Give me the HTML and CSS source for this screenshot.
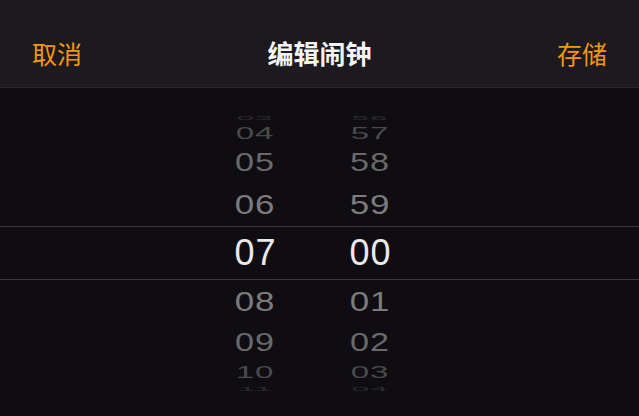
FILE: index.html
```html
<!DOCTYPE html>
<html lang="zh">
<head>
<meta charset="utf-8">
<title>编辑闹钟</title>
<link rel="stylesheet" href="styles.css">
</head>
<body>
<div class="screen">
  <header class="nav">
    <span class="nav-btn">取消</span>
    <span class="nav-title">编辑闹钟</span>
    <span class="nav-btn">存储</span>
  </header>
  <main class="picker">
    <div class="band">
      <div class="col">
        <div class="it r4"><span>03</span></div>
        <div class="it r3"><span>04</span></div>
        <div class="it r2"><span>05</span></div>
        <div class="it r1"><span>06</span></div>
      </div>
      <div class="col">
        <div class="it r4"><span>56</span></div>
        <div class="it r3"><span>57</span></div>
        <div class="it r2"><span>58</span></div>
        <div class="it r1"><span>59</span></div>
      </div>
    </div>
    <div class="band selected">
      <div class="col">
        <div class="it r0"><span>07</span></div>
      </div>
      <div class="col">
        <div class="it r0"><span>00</span></div>
      </div>
    </div>
    <div class="band">
      <div class="col">
        <div class="it r1"><span>08</span></div>
        <div class="it r2"><span>09</span></div>
        <div class="it r3"><span>10</span></div>
        <div class="it r4"><span>11</span></div>
      </div>
      <div class="col">
        <div class="it r1"><span>01</span></div>
        <div class="it r2"><span>02</span></div>
        <div class="it r3"><span>03</span></div>
        <div class="it r4"><span>04</span></div>
      </div>
    </div>
  </main>
</div>
</body>
</html>
```
FILE: styles.css
```css
html, body {
  margin: 0;
  padding: 0;
  background: #0f0d11;
}
.screen {
  width: 639px;
  height: 416px;
  overflow: hidden;
  background: #0f0d11;
  font-family: "Liberation Sans", "Noto Sans CJK SC", sans-serif;
}
.nav {
  box-sizing: border-box;
  height: 88px;
  padding: 19px 32px 0;
  background: #1c1a1e;
  border-bottom: 1px solid #29272b;
  display: flex;
  align-items: center;
  justify-content: space-between;
  font-family: "Noto Sans CJK SC", sans-serif;
}
.nav-btn {
  color: #f4960f;
  font-size: 25px;
  line-height: 1;
}
.nav-title {
  color: #f4f4f4;
  font-size: 26px;
  font-weight: 700;
  line-height: 1;
}
.picker {
  padding-top: 23px;
  display: flex;
  flex-direction: column;
}
.band {
  display: flex;
  padding-left: 198px;
}
.band.selected {
  border-top: 1px solid #3a383c;
  border-bottom: 1px solid #3a383c;
}
.col {
  width: 115px;
  display: flex;
  flex-direction: column;
}
.it {
  display: flex;
  align-items: center;
  justify-content: center;
  overflow: visible;
}
.it span {
  font-size: 36px;
  line-height: 1;
  display: block;
  letter-spacing: 1px;
}
.r0 { height: 52px; }
.r0 span { color: #e9e9e9; }
.r1 { height: 43px; }
.r1 span { color: #7b7b7b; transform: scale(0.97, 0.79); }
.r2 { height: 40px; }
.r2 span { color: #696969; transform: scale(0.95, 0.7); }
.r3 { height: 19px; }
.r3 span { color: #4a4a4a; transform: scale(0.92, 0.44); }
.r4 { height: 13px; }
.r4 span { color: #2c2c2c; transform: scale(0.88, 0.16); }
```
